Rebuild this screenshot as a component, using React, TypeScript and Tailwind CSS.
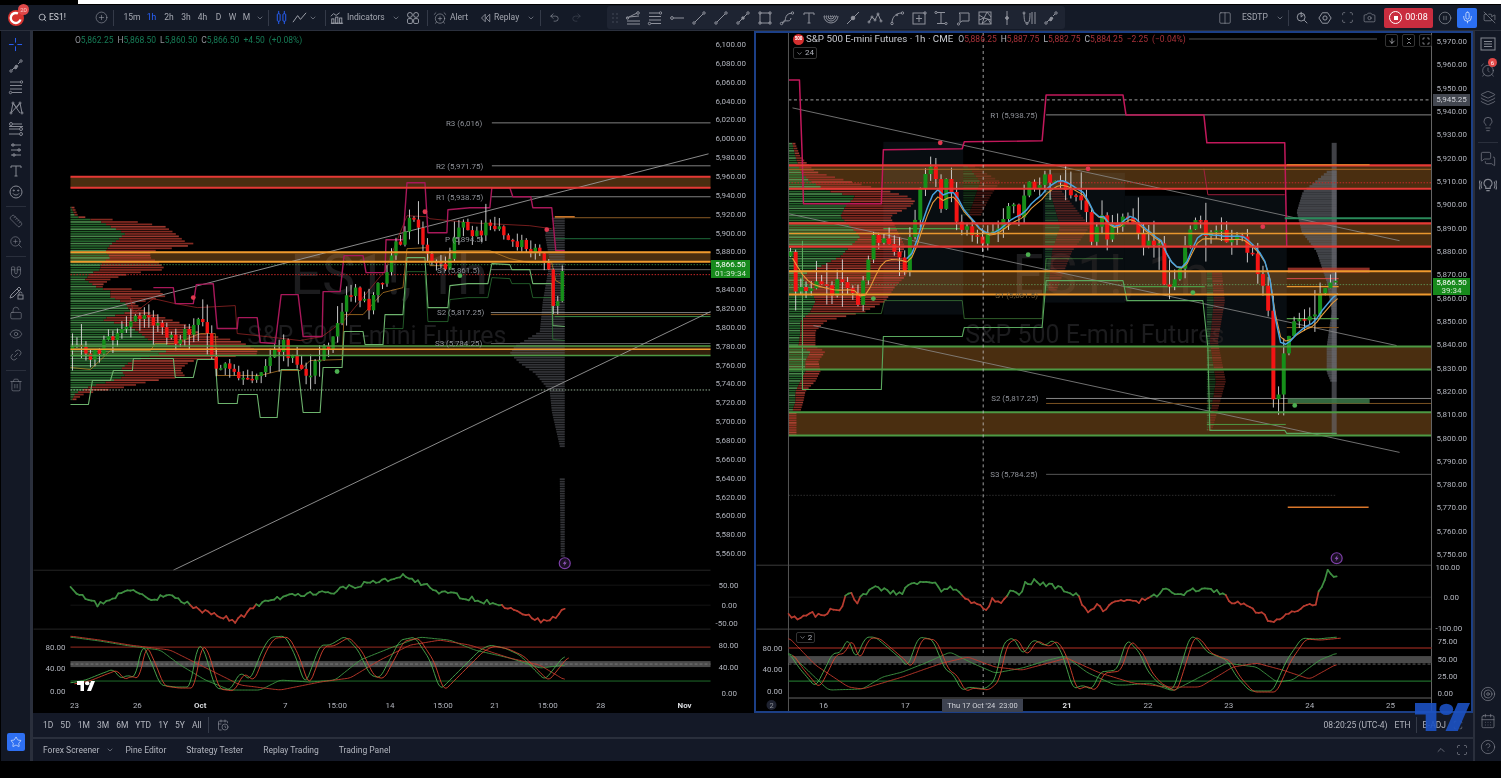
import type { ReactNode } from "react";
import {
  AlarmClock,
  AlarmClockPlus,
  ArrowDown,
  Camera,
  ChevronDown,
  ChevronUp,
  ChevronsDownUp,
  CircleHelp,
  CirclePause,
  CirclePlus,
  Columns2,
  Eye,
  Layers,
  Lightbulb,
  Link2,
  LockOpen,
  Magnet,
  MessagesSquare,
  Mic,
  Redo2,
  Ruler,
  Scan,
  Search,
  Star,
  Target,
  Trash2,
  Undo2,
  VideoOff,
  ZoomIn,
  CalendarDays,
  CalendarClock,
} from "lucide-react";

type Pt = [number, number];
type Row = [number, number, number];

const rng = (seed: number) => {
  let s = seed;
  return () => {
    s = (s * 1664525 + 1013904223) % 4294967296;
    return s / 4294967296;
  };
};

const interp = (pts: Pt[], x: number) => {
  if (x <= pts[0][0]) return pts[0][1];
  for (let i = 1; i < pts.length; i++) {
    if (x <= pts[i][0]) {
      const [x0, y0] = pts[i - 1];
      const [x1, y1] = pts[i];
      return y0 + ((y1 - y0) * (x - x0)) / (x1 - x0 || 1);
    }
  }
  return pts[pts.length - 1][1];
};

const toPoints = (pts: Pt[]) => pts.map((p) => `${p[0].toFixed(1)},${p[1].toFixed(1)}`).join(" ");

// sampled + moving average, so the stochastic lines get round tops
const smooth = (pts: Pt[], win = 2, step = 1.5): Pt[] => {
  const raw: Pt[] = [];
  for (let x = pts[0][0]; x <= pts[pts.length - 1][0]; x += step) raw.push([x, interp(pts, x)]);
  return raw.map((p, i) => {
    let sum = 0;
    let n = 0;
    for (let k = -win; k <= win; k++) {
      if (raw[i + k]) {
        sum += raw[i + k][1];
        n++;
      }
    }
    return [p[0], sum / n] as Pt;
  });
};

const shift = (pts: Pt[], dx: number, dy = 0): Pt[] => pts.map((p) => [p[0] + dx, p[1] + dy]);

const fmt = (n: number) => n.toLocaleString("en-US", { minimumFractionDigits: 2, maximumFractionDigits: 2 });

type Candle = { x: number; o: number; c: number; hi: number; lo: number };

const makeCandles = (pts: Pt[], x0: number, x1: number, step: number, amp: number, wick: number, seed: number) => {
  const r = rng(seed);
  const out: Candle[] = [];
  let prev = interp(pts, x0);
  for (let x = x0; x <= x1; x += step) {
    const c = interp(pts, x) + (r() - 0.5) * amp;
    const w = r() > 0.72 ? wick * 2.4 : wick;
    out.push({ x, o: prev, c, hi: Math.min(prev, c) - r() * w, lo: Math.max(prev, c) + r() * w });
    prev = c;
  }
  return out;
};

const Candles = ({ data, w }: { data: Candle[]; w: number }) => (
  <g>
    {data.map((d, i) => (
      <line key={i} x1={d.x} x2={d.x} y1={d.hi} y2={d.lo} stroke="#dcdcdc" strokeWidth={0.9} />
    ))}
    {data.map((d, i) => (
      <rect
        key={i}
        x={d.x - w / 2}
        y={Math.min(d.o, d.c)}
        width={w}
        height={Math.max(1.6, Math.abs(d.o - d.c))}
        fill={d.c < d.o ? "#168f1a" : "#f51414"}
      />
    ))}
  </g>
);

const Poly = ({ pts, c, w = 1, o = 1 }: { pts: Pt[]; c: string; w?: number; o?: number }) => (
  <polyline points={toPoints(pts)} fill="none" stroke={c} strokeWidth={w} opacity={o} strokeLinejoin="round" />
);

const HLine = ({ y, x1, x2, c, w = 1, dash, o = 1 }: { y: number; x1: number; x2: number; c: string; w?: number; dash?: string; o?: number }) => (
  <line x1={x1} x2={x2} y1={y} y2={y} stroke={c} strokeWidth={w} strokeDasharray={dash} opacity={o} />
);

const Profile = ({ rows, x0, step = 2.4, h = 1.7, o = 0.8 }: { rows: Row[]; x0: number; step?: number; h?: number; o?: number }) => {
  const g: Pt[] = rows.map((r) => [r[0], r[1]]);
  const t: Pt[] = rows.map((r) => [r[0], r[2]]);
  const bars: ReactNode[] = [];
  let i = 0;
  for (let y = rows[0][0]; y <= rows[rows.length - 1][0]; y += step) {
    const a = interp(g, y);
    const b = interp(t, y);
    bars.push(
      <g key={y} opacity={o}>
        <rect x={x0} y={y} width={Math.max(0, a - x0)} height={h} fill={i % 3 === 0 ? "#5aa85e" : "#2f7d38"} />
        <rect x={a} y={y} width={Math.max(0, b - a)} height={h} fill={i % 4 === 0 ? "#c2473a" : "#a5352a"} />
      </g>,
    );
    i++;
  }
  return <g>{bars}</g>;
};

const GrayProfile = ({ rows, x1, h = 1.7, step = 2.4, o = 0.55 }: { rows: Pt[]; x1: number; h?: number; step?: number; o?: number }) => {
  const bars: ReactNode[] = [];
  for (let y = rows[0][0]; y <= rows[rows.length - 1][0]; y += step) {
    const a = interp(rows, y);
    bars.push(<rect key={y} x={a} y={y} width={x1 - a} height={h} fill="#5c5f66" opacity={o} />);
  }
  return <g>{bars}</g>;
};

const Rsi = ({ pts, zero, seed }: { pts: Pt[]; zero: number; seed: number }) => {
  const r = rng(seed);
  const s: Pt[] = [];
  for (let x = pts[0][0]; x <= pts[pts.length - 1][0]; x += 3) s.push([x, interp(pts, x) + (r() - 0.5) * 5]);
  return (
    <g>
      {s.slice(1).map((p, i) => (
        <line
          key={i}
          x1={s[i][0]}
          y1={s[i][1]}
          x2={p[0]}
          y2={p[1]}
          stroke={(p[1] + s[i][1]) / 2 < zero ? "#3e8e41" : "#b83c30"}
          strokeWidth={1.7}
          strokeLinecap="round"
        />
      ))}
    </g>
  );
};

const Bolt = ({ x, y }: { x: number; y: number }) => (
  <g>
    <circle cx={x} cy={y} r={5.5} fill="#1a1022" stroke="#7d3fa8" strokeWidth={1.2} />
    <path d={`M${x + 1.2} ${y - 3.2}L${x - 2} ${y + 0.6}H${x}L${x - 1.2} ${y + 3.2}L${x + 2} ${y - 0.6}H${x}Z`} fill="#9a5cc6" />
  </g>
);

const Dot = ({ x, y, c }: { x: number; y: number; c: string }) => <circle cx={x} cy={y} r={2.4} fill={c} />;

const axisText = "fill-[#b2b5be] text-[8px]";
const labelText = "fill-[#8f9299] text-[8px]";
const bandFill = "#ffa037";

const Tv = ({ className }: { className: string }) => (
  <svg viewBox="0 0 36 22" preserveAspectRatio="none" className={className} fill="currentColor">
    <path d="M14 22H7V9H0V0h14v22zM28 22h-8l8-22h8L28 22z" />
    <circle cx="20.5" cy="5" r="4.5" />
  </svg>
);

// ---- left chart data (page coordinates) ----
const lPath: Pt[] = [
  [72, 350], [90, 355], [110, 340], [130, 325], [145, 310], [160, 330], [180, 340], [200, 315], [215, 360], [230, 375],
  [250, 380], [265, 365], [285, 345], [300, 375], [310, 375], [330, 340], [345, 295], [355, 290], [370, 305], [385, 270],
  [395, 250], [410, 220], [420, 225], [430, 265], [445, 272], [460, 225], [470, 235], [490, 225], [510, 235], [525, 245],
  [545, 260], [549, 275], [552, 312], [556, 312], [560, 282], [565, 268],
];
const lPink: Pt[] = [
  [153, 287], [173, 287], [175, 303], [193, 303], [196, 284], [213, 283], [217, 328], [237, 328], [238, 317], [257, 317],
  [260, 342], [275, 343], [281, 294], [298, 294], [303, 336], [322, 336], [323, 291], [340, 291], [344, 255], [363, 255],
  [366, 272], [385, 272], [386, 239], [403, 239], [407, 182], [425, 182], [428, 232], [447, 232], [448, 209], [470, 207],
  [490, 207], [492, 187], [510, 187], [513, 196], [531, 196], [533, 207], [552, 207], [556, 250], [565, 250],
];
const lGreen: Pt[] = [
  [70, 404], [88, 404], [92, 380], [110, 380], [113, 370], [132, 370], [133, 358], [173, 358], [175, 377], [193, 377],
  [197, 359], [215, 359], [218, 403], [237, 403], [238, 394], [257, 394], [260, 417], [277, 417], [281, 369], [298, 369],
  [303, 412], [320, 412], [323, 367], [342, 367], [344, 331], [363, 331], [365, 344], [383, 344], [385, 314], [403, 314],
  [407, 257], [425, 257], [428, 307], [448, 307], [450, 285], [468, 283], [488, 283], [492, 263], [510, 264], [512, 269],
  [530, 269], [533, 283], [552, 283], [553, 325], [565, 326],
];
const lOrange: Pt[] = [
  [70, 367], [90, 369], [110, 350], [150, 350], [155, 343], [175, 343], [200, 333], [215, 333], [217, 375], [260, 375],
  [280, 370], [300, 370], [310, 360], [342, 359], [344, 314], [363, 314], [383, 292], [403, 287], [407, 248], [427, 247],
  [430, 265], [448, 265], [450, 250], [490, 250], [510, 258], [530, 262], [552, 262], [556, 280], [565, 285],
];
const lDim: Pt[] = [
  [110, 297], [130, 297], [133, 313], [153, 298], [175, 303], [197, 307], [217, 306], [235, 305], [237, 333], [257, 335],
  [300, 340], [322, 336], [344, 320], [385, 270], [407, 215], [427, 216], [430, 218], [470, 222], [530, 225], [552, 228],
];
const lProfile: Row[] = [
  [206, 71, 74], [215, 75, 78], [220, 100, 135], [225, 110, 165], [232, 125, 175], [240, 115, 185], [243, 110, 197], [250, 105, 150],
  [256, 110, 150], [262, 100, 160], [268, 100, 165], [272, 90, 130], [278, 85, 110], [285, 95, 100], [290, 110, 160], [295, 110, 165],
  [302, 125, 135], [310, 130, 145], [318, 100, 170], [325, 130, 190], [332, 140, 200], [340, 150, 240], [345, 180, 250], [352, 160, 260],
  [360, 130, 190], [368, 120, 180], [375, 125, 185], [380, 110, 150], [385, 90, 130], [392, 75, 85], [400, 71, 73],
];
const lGray: Pt[] = [
  [217, 552], [225, 555], [232, 545], [260, 550], [300, 543], [330, 540], [345, 515], [352, 510], [362, 520], [372, 535], [390, 550], [410, 552], [445, 560],
];
const lRsi: Pt[] = [
  [70, 588], [85, 597], [97, 605], [115, 596], [130, 590], [150, 598], [170, 596], [200, 610], [235, 621], [260, 603],
  [290, 595], [330, 592], [370, 582], [405, 576], [440, 592], [480, 600], [500, 606], [520, 612], [548, 623], [565, 607],
];
const lFast: Pt[] = [
  [70, 683], [85, 680], [100, 674], [113, 669], [120, 679], [127, 675], [135, 678], [142, 643], [150, 660], [160, 685],
  [175, 687], [190, 687], [197, 645], [203, 647], [215, 688], [230, 690], [240, 672], [250, 680], [262, 650], [270, 637],
  [285, 636], [295, 655], [305, 685], [320, 645], [330, 645], [345, 636], [358, 650], [370, 675], [380, 678], [400, 640],
  [415, 637], [430, 660], [440, 690], [460, 670], [480, 650], [490, 645], [505, 648], [520, 655], [530, 665], [545, 680], [565, 655],
];
const lSlowG: Pt[] = [
  [70, 637], [100, 641], [130, 646], [160, 650], [180, 665], [205, 680], [230, 690], [260, 690], [280, 680], [310, 682],
  [335, 680], [360, 660], [390, 648], [420, 637], [450, 640], [475, 650], [510, 658], [540, 668], [565, 665],
];
const lSlowR: Pt[] = [
  [70, 636], [100, 640], [130, 645], [170, 650], [200, 665], [240, 685], [280, 690], [320, 682], [350, 678], [380, 660],
  [410, 645], [440, 640], [470, 645], [510, 658], [540, 665], [565, 680],
];
const lCandles = makeCandles(lPath, 72, 565, 4.5, 15, 9, 7);

// ---- right chart data ----
const rPath: Pt[] = [
  [788, 243], [795, 287], [802, 295], [815, 287], [835, 287], [850, 283], [857, 307], [863, 287], [872, 243], [880, 237],
  [888, 250], [905, 265], [912, 230], [918, 190], [932, 163], [938, 187], [940, 207], [947, 182], [955, 197], [958, 233],
  [968, 227], [975, 240], [985, 240], [995, 227], [1005, 210], [1022, 210], [1028, 187], [1042, 187], [1045, 173], [1058, 175],
  [1072, 193], [1083, 197], [1088, 230], [1095, 237], [1100, 207], [1108, 240], [1118, 220], [1125, 203], [1132, 217], [1140, 237],
  [1160, 247], [1165, 283], [1178, 273], [1183, 257], [1193, 210], [1202, 227], [1210, 237], [1240, 235], [1247, 247], [1257, 263],
  [1267, 293], [1270, 347], [1273, 398], [1278, 400], [1281, 370], [1285, 340], [1295, 318], [1310, 318], [1320, 295], [1333, 283], [1337, 282],
];
const rCandles = makeCandles(rPath, 790, 1337, 5.2, 17, 11, 11);
const rLine = makeCandles(rPath, 790, 1337, 5.2, 4, 0, 13);
const ema = (data: Candle[], k: number, off: number): Pt[] => {
  let v = data[0].c;
  return data.map((d) => {
    v += (d.c - v) * k;
    return [d.x + 2, v + off] as Pt;
  });
};
const rBlue = ema(rLine, 0.32, 0).filter((p) => p[0] > 905);
const rOrange = ema(rLine, 0.28, 3);
const rPink: Pt[] = [
  [788, 79], [799, 79], [802, 163], [803, 203], [881, 203], [883, 149], [962, 148], [964, 141], [1042, 140], [1046, 94],
  [1123, 94], [1126, 114], [1204, 114], [1207, 142], [1285, 142], [1287, 246],
];
const rPinkDim: Pt[] = [[1204, 168], [1208, 194], [1285, 194]];
const rGreen: Pt[] = [
  [802, 240], [802, 389], [881, 389], [883, 336], [962, 336], [964, 327], [1042, 327], [1046, 280], [1123, 280], [1127, 300],
  [1203, 300], [1208, 347], [1210, 430], [1285, 430], [1287, 433], [1337, 433],
];
const rGreenDim: Pt[] = [[802, 313], [881, 313], [884, 300], [962, 300], [964, 318], [1042, 318], [1046, 258], [1123, 258]];
const rProfile: Row[] = [
  [142, 792, 795], [155, 795, 800], [170, 800, 815], [180, 810, 850], [190, 830, 890], [195, 855, 908], [200, 850, 915], [205, 845, 910],
  [215, 840, 890], [225, 850, 895], [235, 860, 900], [245, 850, 905], [255, 840, 900], [265, 820, 910], [275, 800, 905], [285, 810, 895],
  [300, 815, 885], [310, 810, 865], [320, 800, 825], [330, 800, 815], [345, 798, 815], [350, 810, 825], [360, 805, 818], [370, 805, 820],
  [380, 800, 815], [390, 795, 805], [400, 795, 803], [410, 792, 800],
];
const rGray: Pt[] = [
  [170, 1327], [180, 1315], [190, 1303], [210, 1297], [230, 1302], [250, 1317], [280, 1327], [310, 1332], [345, 1327], [370, 1327], [380, 1331],
];
const rRsi: Pt[] = [
  [788, 615], [795, 618], [812, 614], [822, 617], [834, 607], [838, 613], [848, 591], [853, 595], [856, 605], [860, 596],
  [873, 587], [902, 594], [908, 583], [930, 584], [933, 580], [940, 592], [952, 588], [962, 595], [972, 603], [985, 609],
  [992, 600], [998, 603], [1003, 603], [1011, 587], [1018, 596], [1025, 584], [1035, 581], [1055, 586], [1068, 592], [1077, 595],
  [1088, 613], [1097, 605], [1103, 611], [1118, 600], [1135, 602], [1150, 598], [1165, 590], [1180, 595], [1200, 588], [1215, 590],
  [1230, 600], [1240, 604], [1255, 610], [1275, 623], [1285, 615], [1300, 608], [1315, 605], [1322, 585], [1328, 572], [1337, 577],
];
const rFast: Pt[] = [
  [788, 652], [798, 667], [815, 687], [825, 668], [832, 653], [840, 653], [848, 637], [855, 660], [865, 637], [875, 637],
  [888, 648], [902, 660], [907, 668], [918, 637], [932, 639], [938, 653], [945, 670], [952, 673], [962, 691], [968, 687],
  [985, 689], [995, 680], [1003, 643], [1013, 637], [1023, 655], [1033, 639], [1045, 646], [1053, 639], [1062, 653], [1073, 689],
  [1083, 685], [1092, 690], [1100, 672], [1117, 670], [1127, 639], [1140, 653], [1147, 670], [1157, 682], [1173, 691], [1185, 653],
  [1190, 636], [1197, 638], [1207, 652], [1227, 660], [1237, 677], [1250, 691], [1273, 691], [1287, 660], [1302, 638], [1317, 639], [1337, 637],
];
const rSlowR: Pt[] = [
  [788, 637], [815, 665], [848, 687], [862, 689], [902, 677], [942, 663], [968, 657], [995, 667], [1022, 670], [1067, 658],
  [1100, 673], [1133, 683], [1167, 687], [1200, 687], [1233, 667], [1257, 663], [1283, 670], [1310, 679], [1337, 664],
];
const rSlowG: Pt[] = [
  [788, 652], [828, 690], [862, 689], [882, 677], [902, 672], [925, 663], [950, 652], [972, 663], [995, 673], [1022, 668],
  [1048, 660], [1065, 656], [1088, 673], [1115, 685], [1127, 685], [1150, 683], [1173, 691], [1200, 677], [1227, 663], [1257, 667],
  [1277, 682], [1293, 680], [1320, 660], [1337, 653],
];

const LeftPriceAxis = () => {
  const ticks: number[] = [];
  for (let p = 6100; p >= 5560; p -= 20) ticks.push(p);
  return (
    <g>
      {ticks.map((p) => (
        <text key={p} x={716} y={43 + (6100 - p) * 0.9444 + 3} className={axisText}>
          {fmt(p)}
        </text>
      ))}
    </g>
  );
};

const RightPriceAxis = () => {
  const ticks: number[] = [];
  for (let p = 5970; p >= 5750; p -= 10) ticks.push(p);
  return (
    <g>
      {ticks.map((p) => (
        <text key={p} x={1437} y={40 + (5970 - p) * 2.336 + 3} className={axisText}>
          {fmt(p)}
        </text>
      ))}
    </g>
  );
};

const TimeLabels = ({ items, y }: { items: [string, number, boolean?][]; y: number }) => (
  <g>
    {items.map(([t, x, b]) => (
      <text key={t + x} x={x} y={y} textAnchor="middle" className={b ? "fill-[#d8dade] text-[8px] font-bold" : axisText}>
        {t}
      </text>
    ))}
  </g>
);

const Legend = ({ items, color }: { items: [string, string][]; color: string }) => (
  <div className={`flex gap-[4px] whitespace-nowrap text-[8.5px] leading-[10px] ${color}`}>
    {items.map(([k, v]) => (
      <span key={k + v}>
        <span className="text-[#b2b5be]">{k}</span>
        {v}
      </span>
    ))}
  </div>
);

const LeftChart = () => (
  <div className="relative h-full w-[721px] shrink-0 bg-black">
    <svg viewBox="33 30 721 683" className="block h-full w-full">
      <text x={290} y={293} className="fill-[#1c1c1e] text-[56px]">ES1!, 1h</text>
      <text x={247} y={343} className="fill-[#1c1c1e] text-[25px]">S&amp;P 500 E-mini Futures</text>

      <rect x={70} y={176} width={641} height={11} fill={bandFill} opacity={0.29} />
      <rect x={70} y={251} width={641} height={10} fill={bandFill} opacity={0.29} />
      <rect x={70} y={345} width={641} height={10} fill={bandFill} opacity={0.2} />

      <Profile rows={lProfile} x0={70} />
      <GrayProfile rows={lGray} x1={565} />
      <GrayProfile rows={[[478, 560], [555, 561]]} x1={565} />

      <HLine y={122} x1={492} x2={711} c="#a0a0a0" w={0.8} />
      <HLine y={165} x1={492} x2={711} c="#a0a0a0" w={0.8} />
      <HLine y={196} x1={491} x2={711} c="#a0a0a0" w={0.8} />
      <HLine y={217} x1={555} x2={711} c="#8a5a24" />
      <HLine y={216} x1={555} x2={575} c="#c8742a" w={1.5} />
      <HLine y={238} x1={555} x2={711} c="#1e6b3a" />
      <HLine y={269} x1={491} x2={711} c="#777" w={0.8} />
      <HLine y={312} x1={491} x2={711} c="#a0a0a0" w={0.8} />
      <HLine y={314} x1={491} x2={711} c="#8a5a24" />
      <HLine y={316} x1={555} x2={711} c="#3c8c46" />
      <HLine y={343} x1={491} x2={711} c="#777" w={0.8} />
      <HLine y={264} x1={70} x2={711} c="#3f8f4a" dash="1.5 1.5" w={0.8} />
      <HLine y={274} x1={70} x2={711} c="#c62828" dash="1.5 1.5" />
      <HLine y={389.5} x1={70} x2={711} c="#b8d8b8" dash="1.5 1.5" w={0.8} />

      <Poly pts={[[70, 318], [709, 153]]} c="#9a9a9a" w={0.9} />
      <Poly pts={[[173, 570], [711, 311]]} c="#9a9a9a" w={0.9} />
      <Poly pts={lOrange} c="#c8862a" o={0.7} />
      <Poly pts={lDim} c="#a52a2a" o={0.7} />
      <Poly pts={lGreen} c="#6db36d" w={1.1} />
      <Poly pts={shift(lGreen.slice(28), 0, 14)} c="#2f7d38" o={0.7} />
      <Poly pts={lPink} c="#a8185a" w={1.4} />

      <Candles data={lCandles} w={3.4} />

      <HLine y={176} x1={70} x2={711} c="#e53935" w={2} />
      <HLine y={187} x1={70} x2={711} c="#e53935" w={2} />
      <HLine y={251.5} x1={70} x2={711} c="#ef9a2e" w={2} />
      <HLine y={261} x1={70} x2={711} c="#ef9a2e" w={2} />
      <HLine y={345.5} x1={70} x2={711} c="#4d9a44" w={1.6} />
      <HLine y={348.7} x1={70} x2={711} c="#ef9a2e" w={1.6} />
      <HLine y={355} x1={70} x2={711} c="#4d9a44" w={1.6} />

      <Dot x={193} y={297} c="#e0384f" />
      <Dot x={337} y={371} c="#4caf50" />
      <Dot x={425} y={211} c="#e0384f" />
      <Dot x={460} y={275} c="#4caf50" />
      <Dot x={547} y={229} c="#e0384f" />

      <text x={446} y={125} className={labelText}>R3 (6,016)</text>
      <text x={436} y={168} className={labelText}>R2 (5,971.75)</text>
      <text x={436} y={199} className={labelText}>R1 (5,938.75)</text>
      <text x={445} y={241} className={labelText}>P (5,894.5)</text>
      <text x={437} y={272} className={labelText}>S1 (5,861.5)</text>
      <text x={437} y={314} className={labelText}>S2 (5,817.25)</text>
      <text x={435} y={345} className={labelText}>S3 (5,784.25)</text>

      <Bolt x={565} y={563} />

      <HLine y={570} x1={33} x2={711} c="#252525" />
      <HLine y={629} x1={33} x2={711} c="#252525" />
      <HLine y={585} x1={70} x2={711} c="#141414" />
      <HLine y={605} x1={70} x2={711} c="#141414" />

      <Rsi pts={lRsi} zero={605} seed={3} />

      <rect x={70} y={661} width={641} height={6} fill="#4a4a4a" />
      <HLine y={664} x1={70} x2={711} c="#8a8a8a" dash="3 2" w={0.7} />
      <HLine y={647} x1={70} x2={711} c="#9b2c22" />
      <HLine y={681} x1={70} x2={711} c="#1f6b2a" />
      <Poly pts={smooth(lSlowG)} c="#3f9a45" w={0.9} />
      <Poly pts={smooth(lSlowR)} c="#c53a2c" w={0.9} />
      <Poly pts={smooth(lFast)} c="#4caf50" w={0.9} />
      <Poly pts={smooth(shift(lFast, 4, 1))} c="#d9432f" w={0.9} />

      <text x={65} y={650} textAnchor="end" className={axisText}>80.00</text>
      <text x={65} y={671} textAnchor="end" className={axisText}>40.00</text>
      <text x={65} y={694} textAnchor="end" className={axisText}>0.00</text>

      <LeftPriceAxis />
      <text x={719} y={588} className={axisText}>50.00</text>
      <text x={722} y={608} className={axisText}>0.00</text>
      <text x={716} y={626} className={axisText}>-50.00</text>
      <text x={719} y={648} className={axisText}>80.00</text>
      <text x={719} y={670} className={axisText}>40.00</text>
      <text x={722} y={696} className={axisText}>0.00</text>

      <TimeLabels
        y={708}
        items={[
          ["23", 74], ["26", 137], ["Oct", 200, true], ["7", 285], ["15:00", 337], ["14", 390], ["15:00", 443],
          ["21", 495], ["15:00", 548], ["28", 601], ["Nov", 685, true],
        ]}
      />
    </svg>

    <div className="absolute left-[42px] top-[4px] opacity-80">
      <Legend
        color="text-[#1d9a6c]"
        items={[["O", "5,862.25"], ["H", "5,868.50"], ["L", "5,860.50"], ["C", "5,866.50"], ["", "+4.50"], [" ", "(+0.08%)"]]}
      />
    </div>
    <Tv className="absolute left-[44px] top-[650px] h-[10px] w-[18px] text-white" />
    <div className="absolute left-[678px] top-[229px] flex h-[18px] w-[39px] flex-col items-center justify-center bg-[#178a1c] text-[8px] leading-[9px] text-white">
      <span>5,866.50</span>
      <span className="text-[#cfe8cf]">01:39:34</span>
    </div>
  </div>
);

const RightChart = () => (
  <div className="relative h-full w-[719px] shrink-0 border-2 border-[#1c3f86] bg-black">
    <svg viewBox="756 32 715 679" className="block h-full w-full">
      <rect x={883} y={141} width={80} height={173} fill="#080d11" />
      <rect x={1043} y={172} width={82} height={130} fill="#080d11" />
      <rect x={1125} y={195} width={80} height={105} fill="#080d11" />
      <rect x={1205} y={195} width={82} height={150} fill="#080d11" />

      <text x={1012} y={293} className="fill-[#1c1c1e] text-[56px]">ES1!, 1h</text>
      <text x={965} y={342} className="fill-[#1c1c1e] text-[25px]">S&amp;P 500 E-mini Futures</text>

      <rect x={788} y={164} width={644} height={24} fill={bandFill} opacity={0.29} />
      <rect x={788} y={222} width={644} height={24} fill={bandFill} opacity={0.29} />
      <rect x={788} y={271} width={644} height={23} fill={bandFill} opacity={0.29} />
      <rect x={788} y={346} width={644} height={23} fill={bandFill} opacity={0.29} />
      <rect x={788} y={412} width={644} height={23} fill={bandFill} opacity={0.29} />

      <Profile rows={rProfile} x0={788} />
      <Profile rows={[[412, 788, 796], [435, 788, 796]]} x0={788} />
      <Profile rows={[[165, 968, 975], [180, 980, 1000], [195, 975, 990], [215, 968, 980]]} x0={963} o={0.35} />
      <Profile rows={[[190, 1050, 1062], [225, 1060, 1090], [250, 1052, 1072], [290, 1048, 1056]]} x0={1045} o={0.4} />
      <Profile rows={[[270, 1212, 1222], [300, 1214, 1225], [340, 1210, 1218], [380, 1216, 1226], [430, 1208, 1212]]} x0={1207} o={0.45} />

      <GrayProfile rows={rGray} x1={1337} h={2.4} o={0.7} />
      <rect x={1332} y={142} width={5} height={293} fill="#6a6d74" opacity={0.6} />

      <Poly pts={[[792, 107], [1400, 240]]} c="#8c8c8c" w={0.8} />
      <Poly pts={[[788, 213], [1397, 345]]} c="#8c8c8c" w={0.8} />
      <Poly pts={[[813, 325], [1400, 452]]} c="#8c8c8c" w={0.8} />

      <HLine y={99} x1={788} x2={1432} c="#c8c8c8" dash="3 2.5" w={0.8} />
      <HLine y={114} x1={1046} x2={1432} c="#a8a8a8" w={0.8} />
      <HLine y={398} x1={1046} x2={1432} c="#a8a8a8" w={0.8} />
      <HLine y={403} x1={1046} x2={1432} c="#7a5222" />
      <HLine y={474} x1={1046} x2={1432} c="#555" />
      <HLine y={495} x1={788} x2={1337} c="#3a3a3a" dash="1.5 1.5" w={0.8} />
      <HLine y={507} x1={1288} x2={1369} c="#d9762a" w={1.5} />
      <HLine y={182} x1={788} x2={1432} c="#c62828" dash="1.5 1.5" />
      <HLine y={284} x1={788} x2={1432} c="#5fa05f" dash="1.5 1.5" w={0.8} />

      <rect x={1288} y={267} width={82} height={5} fill="#b23a2e" opacity={0.8} />
      <rect x={1288} y={398} width={82} height={5} fill="#3d7a4a" opacity={0.85} />
      <HLine y={278} x1={1287} x2={1339} c="#d84a4a" />
      <HLine y={286} x1={1287} x2={1339} c="#e8962e" w={1.4} />
      <HLine y={318} x1={1287} x2={1339} c="#4d9a44" w={1.4} />
      <HLine y={327} x1={1287} x2={1339} c="#8a5a24" />
      <HLine y={424} x1={1207} x2={1286} c="#4d9a44" />
      <HLine y={286} x1={1125} x2={1205} c="#4d9a44" w={1.4} />
      <HLine y={228} x1={883} x2={962} c="#4d9a44" w={1.2} />

      <Poly pts={rPink} c="#c2185b" w={1.5} />
      <Poly pts={rPinkDim} c="#a52040" />
      <Poly pts={rGreen} c="#5aa85e" w={1.1} />
      <Poly pts={rGreenDim} c="#4d9a44" o={0.6} />

      <Candles data={rCandles} w={4} />
      <Poly pts={rOrange} c="#e69a3a" w={1.1} />
      <Poly pts={rBlue} c="#4aa3e0" w={1.5} />

      <HLine y={164.5} x1={788} x2={1432} c="#e53935" w={2.2} />
      <HLine y={164} x1={1287} x2={1370} c="#e8962e" w={1} />
      <HLine y={168.5} x1={788} x2={1432} c="#a8682a" />
      <HLine y={188} x1={788} x2={1432} c="#e53935" w={2.2} />
      <HLine y={217.5} x1={1285} x2={1432} c="#2a8a5a" w={2} />
      <HLine y={222.7} x1={788} x2={1432} c="#e53935" w={2.2} />
      <HLine y={232.7} x1={788} x2={1432} c="#e8962e" w={1.5} />
      <HLine y={246} x1={788} x2={1432} c="#e53935" w={2.2} />
      <HLine y={270.7} x1={788} x2={1432} c="#ef9a2e" w={2} />
      <HLine y={294} x1={788} x2={1432} c="#ef9a2e" w={2} />
      <HLine y={346} x1={788} x2={1432} c="#4d9a44" w={2} />
      <HLine y={369} x1={788} x2={1432} c="#4d9a44" w={2} />
      <HLine y={411.7} x1={788} x2={1432} c="#4d9a44" w={2} />
      <HLine y={435} x1={788} x2={1432} c="#4d9a44" w={2} />

      <Dot x={940} y={142} c="#e0384f" />
      <Dot x={1088} y={168} c="#e0384f" />
      <Dot x={1263} y={226} c="#e0384f" />
      <Dot x={873} y={298} c="#4caf50" />
      <Dot x={1028} y={254} c="#4caf50" />
      <Dot x={1193} y={292} c="#4caf50" />
      <Dot x={1295} y={405} c="#4caf50" />

      <text x={990} y={117} className={labelText}>R1 (5,938.75)</text>
      <text x={995} y={297} className="fill-[#6b5a3a] text-[8px]">S1 (5,861.5)</text>
      <text x={991} y={401} className={labelText}>S2 (5,817.25)</text>
      <text x={990} y={477} className={labelText}>S3 (5,784.25)</text>

      <Bolt x={1337} y={558} />

      <line x1={983} x2={983} y1={32} y2={698} stroke="#c8c8c8" strokeDasharray="3 3" strokeWidth={0.8} />

      <HLine y={565} x1={756} x2={1432} c="#3a3a3a" />
      <HLine y={597} x1={788} x2={1432} c="#1c1c1c" />
      <HLine y={629} x1={756} x2={1432} c="#444" />
      <HLine y={698} x1={788} x2={1432} c="#666" />
      <line x1={788} x2={788} y1={32} y2={711} stroke="#555" />
      <line x1={1432} x2={1432} y1={32} y2={711} stroke="#666" />

      <Rsi pts={rRsi} zero={596} seed={5} />

      <rect x={788} y={656} width={644} height={7} fill="#4a4a4a" />
      <HLine y={664} x1={788} x2={1432} c="#8a8a8a" dash="3 2" w={0.7} />
      <HLine y={648} x1={788} x2={1432} c="#7a2018" w={1.5} />
      <HLine y={681} x1={788} x2={1432} c="#1f6b2a" w={1.2} />
      <Poly pts={smooth(rSlowG)} c="#3f9a45" w={0.9} />
      <Poly pts={smooth(rSlowR)} c="#c53a2c" w={0.9} />
      <Poly pts={smooth(rFast)} c="#4caf50" w={0.9} />
      <Poly pts={smooth(shift(rFast, 4, 1))} c="#d9432f" w={0.9} />

      <text x={782} y={651} textAnchor="end" className={axisText}>80.00</text>
      <text x={782} y={672} textAnchor="end" className={axisText}>40.00</text>
      <text x={782} y={694} textAnchor="end" className={axisText}>0.00</text>

      <RightPriceAxis />
      <text x={1436} y={570} className={axisText}>100.00</text>
      <text x={1444} y={600} className={axisText}>0.00</text>
      <text x={1436} y={631} className={axisText}>-100.00</text>
      <text x={1438} y={644} className={axisText}>75.00</text>
      <text x={1438} y={662} className={axisText}>50.00</text>
      <text x={1438} y={679} className={axisText}>25.00</text>
      <text x={1438} y={696} className={axisText}>0.00</text>

      <TimeLabels
        y={708}
        items={[["16", 823], ["17", 905], ["21", 1067, true], ["22", 1148], ["23", 1229], ["24", 1310], ["25", 1391]]}
      />
      <circle cx={771} cy={705} r={5} fill="#1e2230" />
      <text x={771} y={708} textAnchor="middle" className="fill-[#8f9299] text-[7.5px]">2</text>
    </svg>

    {/* pane header */}
    <div className="absolute left-[37px] top-0 flex h-[12px] items-center">
      <div className="flex h-[11px] w-[11px] items-center justify-center rounded-full bg-[#d32f2f] text-[4.5px] font-bold text-white">500</div>
      <span className="ml-[2px] whitespace-nowrap text-[9.75px] text-[#c8cad0]">S&amp;P 500 E-mini Futures · 1h · CME</span>
      <div className="ml-[5px]">
        <Legend
          color="text-[#a8323a]"
          items={[["O", "5,886.25"], ["H", "5,887.75"], ["L", "5,882.75"], ["C", "5,884.25"], ["", "−2.25"], [" ", "(−0.04%)"]]}
        />
      </div>
      <div className="ml-[3px] h-[2px] w-[188px] bg-[#2a2a2a]" />
    </div>
    <div className="absolute left-[37px] top-[14px] flex h-[12px] w-[24px] items-center justify-center gap-[2px] rounded-[2px] border border-[#333] text-[8px] text-[#b2b5be]">
      <ChevronDown size={7} />
      24
    </div>
    <div className="absolute left-[40px] top-[599px] flex h-[11px] w-[19px] items-center justify-center gap-[2px] rounded-[2px] border border-[#333] bg-black text-[8px] text-[#b2b5be]">
      <ChevronDown size={7} />
      2
    </div>
    <div className="absolute right-[39px] top-[1px] flex gap-[4px] text-[#d0d2d8]">
      <span className="flex h-[13px] w-[13px] items-center justify-center rounded-[2px] border border-[#333] bg-black"><ArrowDown size={8} /></span>
      <span className="flex h-[13px] w-[13px] items-center justify-center rounded-[2px] border border-[#333] bg-black"><ChevronsDownUp size={8} /></span>
      <span className="flex h-[13px] w-[13px] items-center justify-center rounded-[2px] border border-[#333] bg-black"><Scan size={8} /></span>
    </div>

    <div className="absolute left-[677px] top-[61px] flex h-[12px] w-[37px] items-center justify-center bg-[#434750] text-[8px] text-[#d0d2d8]">5,945.25</div>
    <div className="absolute left-[677px] top-[245px] flex h-[17px] w-[37px] flex-col items-center justify-center bg-[#178a1c] text-[8px] leading-[8px] text-white">
      <span>5,866.50</span>
      <span className="text-[#cfe8cf]">39:34</span>
    </div>
    <div className="absolute left-[186px] top-[666px] flex h-[13px] w-[81px] items-center justify-center bg-[#3d4250] text-[7.5px] text-[#d0d2d8]">Thu 17 Oct '24&nbsp;&nbsp;23:00</div>
  </div>
);

// ---- icons ----
const Ic = ({ children, size = 16 }: { children: ReactNode; size?: number }) => (
  <svg viewBox="0 0 16 16" width={size} height={size} fill="none" stroke="currentColor" strokeWidth={1}>
    {children}
  </svg>
);

const TrendEnds = () => (
  <>
    <circle cx="3" cy="13" r="1.2" />
    <circle cx="13" cy="3" r="1.2" />
    <path d="M4 12 12 4" />
  </>
);
const PencilLink = () => (
  <>
    <circle cx="3" cy="13" r="1.2" />
    <circle cx="13" cy="3" r="1.2" />
    <path d="M4 12 6 10M10 6l2-2" />
    <path d="M6 10 8 7l2 1-2 3z" fill="currentColor" />
  </>
);
const FibLines = () => (
  <>
    <path d="M2 3h10M2 6.5h12M2 10h12M4 13.5h10" />
    <circle cx="13.5" cy="3" r="1.2" />
    <circle cx="2.5" cy="13.5" r="1.2" />
  </>
);

const drawTools: ReactNode[] = [
  <><path d="M2 14h13M2 11h13M2 8l10-5" /><path d="M4 7l10-1" /><circle cx="2.5" cy="8" r="1.2" /><circle cx="13" cy="3" r="1.3" /></>,
  <FibLines />,
  <><path d="M4.5 8H15" /><circle cx="3" cy="8" r="1.4" /></>,
  <TrendEnds />,
  <TrendEnds />,
  <><circle cx="3" cy="13" r="1.2" /><circle cx="13" cy="3" r="1.2" /><path d="M4 12l8-8" /><path d="M7 9l2-2" strokeWidth="3" /></>,
  <><rect x="3" y="3" width="10" height="10" /><circle cx="3" cy="3" r="1.2" /><circle cx="13" cy="3" r="1.2" /><circle cx="3" cy="13" r="1.2" /><circle cx="13" cy="13" r="1.2" /></>,
  <><path d="M3 13C9 13 3 4 13 3" /><path d="M3 13c2-5 8 1 9-5" /><circle cx="2.5" cy="13.5" r="1.2" /><circle cx="13.5" cy="3" r="1.2" /></>,
  <path d="M3 3h10M8 3v10M3 3v2M13 3v2M6.5 13h3" />,
  <><path d="M1 6a7 7 0 0 0 14 0M3 6a5 5 0 0 0 10 0M5 6a3 3 0 0 0 6 0M7 6a1 1 0 0 0 2 0" /><path d="M1 6h14" strokeDasharray="1 1" /></>,
  <><path d="M2 14 14 2" /><circle cx="8" cy="8" r="1.8" fill="currentColor" /></>,
  <><path d="M2 12l3-5 3 3 3-6 3 7" /><circle cx="2" cy="12" r="1" /><circle cx="5" cy="7" r="1" /><circle cx="8" cy="10" r="1" /><circle cx="11" cy="4" r="1" /><circle cx="14" cy="11" r="1" /></>,
  <><path d="M3 13c0-6 4-10 10-10" /><circle cx="3" cy="13.5" r="1.2" /><circle cx="13.5" cy="3" r="1.2" /><circle cx="8" cy="5" r="0.8" /></>,
  <><rect x="2" y="3" width="12" height="11" /><path d="M8 5v7M5 8.5h6" /><circle cx="14" cy="3" r="1.2" /></>,
  <><path d="M4 2.5h8M4 13.5h8M8 2.5v11" /><circle cx="3" cy="2.5" r="1.1" /><circle cx="13" cy="13.5" r="1.1" /></>,
  <><path d="M4 3h10v8H7l-2 1.5V4z" /><circle cx="3.5" cy="14" r="1.1" /></>,
  <><rect x="2" y="2" width="12" height="12" /><path d="M2 5l5 3 3-6M7 8l-2 6M7 8l7 2M10 2l4 5M5 14l6-5 3 5M2 10l5-2" /></>,
  <><path d="M8 1v14" /><circle cx="8" cy="8" r="1.4" fill="currentColor" /></>,
  <><path d="M3 3c0 8 1 10 3 10s3-2 3-10M11 2v12M14 2v12" /><circle cx="3" cy="3" r="1" /><circle cx="6" cy="13.5" r="1" /></>,
  <PencilLink />,
];

const Sep = ({ className = "" }: { className?: string }) => <div className={`h-[16px] w-px shrink-0 bg-[#343a48] ${className}`} />;

const Tf = ({ t, w, active }: { t: string; w: string; active?: boolean }) => (
  <span className={`flex justify-center ${w} ${active ? "text-[#2962ff]" : ""}`}>{t}</span>
);

const Chev = ({ className = "" }: { className?: string }) => (
  <span className={`flex w-[10px] shrink-0 justify-center text-[#8a8e98] ${className}`}>
    <ChevronDown size={8} />
  </span>
);

const TopBar = () => (
  <div className="flex h-[25px] shrink-0 items-center bg-[#141a27] text-[8.5px] text-[#a4a7b0]">
    <div className="flex w-[607px] shrink-0 items-center">
      <div className="relative ml-[8px] h-[16px] w-[16px] shrink-0 rounded-full bg-[#d6322e]">
        <svg viewBox="0 0 16 16" className="h-[16px] w-[16px]" fill="none" stroke="#fff" strokeWidth="2.4">
          <path d="M10 3.5a5 5 0 1 0 2.5 6" />
        </svg>
        <span className="absolute left-[10px] top-[-6px] flex h-[11px] w-[11px] items-center justify-center rounded-full bg-[#e04848] text-[6px] text-[#f6c6c6]">20</span>
      </div>
      <div className="ml-[14px] flex w-[37px] shrink-0 items-center gap-[2px] text-[#d0d2d8]">
        <Search size={9} />
        ES1!
      </div>
      <span className="ml-[17px] flex w-[18px] shrink-0 justify-center"><CirclePlus size={13} strokeWidth={1} /></span>
      <Sep className="ml-[3px]" />
      <div className="ml-[7px] flex shrink-0">
        <Tf t="15m" w="w-[22px]" />
        <Tf t="1h" w="w-[17px]" active />
        <Tf t="2h" w="w-[18px]" />
        <Tf t="3h" w="w-[16px]" />
        <Tf t="4h" w="w-[17px]" />
        <Tf t="D" w="w-[15px]" />
        <Tf t="W" w="w-[13px]" />
        <Tf t="M" w="w-[15px]" />
      </div>
      <Chev className="ml-[1px]" />
      <Sep className="ml-[3px]" />
      <span className="ml-[3px] flex w-[18px] shrink-0 justify-center text-[#2962ff]">
        <Ic size={15}><path d="M5 1v3M5 12v3M11 1v3M11 12v3" /><rect x="3.5" y="4" width="3" height="8" rx="1" /><rect x="9.5" y="4" width="3" height="8" rx="1" /></Ic>
      </span>
      <span className="flex w-[18px] shrink-0 justify-center"><Ic size={15}><path d="M1 13 6 6l3 4 6-7" /></Ic></span>
      <Chev />
      <Sep className="ml-[7px]" />
      <span className="ml-[3px] flex w-[16px] shrink-0 justify-center">
        <Ic size={14}><path d="M1 6l3-3 3 2 4-3M1 14h14" /><rect x="2" y="9" width="2.5" height="5" /><rect x="6.5" y="7" width="2.5" height="7" /><rect x="11" y="8" width="2.5" height="6" /></Ic>
      </span>
      <span className="ml-[2px] w-[38px] shrink-0">Indicators</span>
      <Chev className="ml-[6px]" />
      <span className="ml-[4px] flex w-[16px] shrink-0 justify-center">
        <Ic size={14}><circle cx="4.5" cy="4.5" r="2.8" /><circle cx="11.5" cy="4.5" r="2.8" /><rect x="1.7" y="8.7" width="5.6" height="5.6" rx="1.5" /><rect x="8.7" y="8.7" width="5.6" height="5.6" rx="1.5" /></Ic>
      </span>
      <Sep className="ml-[6px]" />
      <span className="ml-[4px] flex w-[16px] shrink-0 justify-center"><AlarmClockPlus size={14} strokeWidth={1} /></span>
      <span className="ml-[2px] w-[20px] shrink-0">Alert</span>
      <span className="ml-[9px] flex w-[14px] shrink-0 justify-center">
        <Ic size={12}><path d="M7 3 2 8l5 5M13 3 8 8l5 5zM7 3v10" /></Ic>
      </span>
      <span className="ml-px w-[26px] shrink-0">Replay</span>
      <Chev className="ml-[6px]" />
      <Sep className="ml-[4px]" />
      <span className="ml-[6px] flex w-[14px] shrink-0 justify-center"><Undo2 size={11} strokeWidth={1.2} /></span>
      <span className="ml-[8px] flex w-[14px] shrink-0 justify-center text-[#4a4f5c]"><Redo2 size={11} strokeWidth={1.2} /></span>
    </div>

    <div className="flex h-[23px] w-[458px] shrink-0 items-center rounded-[3px] bg-[#1e2432] text-[#8f929c]">
      <span className="flex w-[15px] shrink-0 justify-center text-[#4a4f5c]">
        <svg viewBox="0 0 6 10" width="6" height="10" fill="currentColor">
          <circle cx="1" cy="1" r=".8" /><circle cx="5" cy="1" r=".8" /><circle cx="1" cy="5" r=".8" /><circle cx="5" cy="5" r=".8" /><circle cx="1" cy="9" r=".8" /><circle cx="5" cy="9" r=".8" />
        </svg>
      </span>
      {drawTools.map((t, i) => (
        <span key={i} className="flex w-[22px] shrink-0 justify-center">
          <Ic>{t}</Ic>
        </span>
      ))}
    </div>

    <div className="flex flex-1 items-center">
      <span className="ml-[152px] flex w-[16px] shrink-0 justify-center"><Columns2 size={14} strokeWidth={1} /></span>
      <span className="ml-[9px] w-[26px] shrink-0">ESDTP</span>
      <Chev className="ml-[7px]" />
      <Sep className="ml-[3px]" />
      <span className="ml-[6px] flex w-[14px] shrink-0 justify-center">
        <Ic size={14}><circle cx="7" cy="7" r="4.5" /><path d="M10.5 10.5 14 14M7 1v6l3-3" /></Ic>
      </span>
      <span className="ml-[9px] flex w-[14px] shrink-0 justify-center">
        <Ic size={14}><path d="M5 2h6l4 6-4 6H5L1 8z" /><circle cx="8" cy="8" r="2.4" /></Ic>
      </span>
      <span className="ml-[8px] flex w-[14px] shrink-0 justify-center"><Scan size={13} strokeWidth={1} /></span>
      <span className="ml-[8px] flex w-[14px] shrink-0 justify-center"><Camera size={13} strokeWidth={1} /></span>
      <div className="ml-[8px] flex h-[20px] w-[49px] shrink-0 items-center justify-center gap-[3px] rounded-[2px] bg-[#c92d3f] text-[9px] text-white">
        <span className="flex h-[13px] w-[13px] items-center justify-center rounded-full border border-white">
          <span className="h-[4px] w-[4px] bg-white" />
        </span>
        00:08
      </div>
      <span className="ml-[4px] flex w-[16px] shrink-0 justify-center"><CirclePause size={14} strokeWidth={1} /></span>
      <div className="ml-[4px] flex h-[20px] w-[20px] shrink-0 items-center justify-center rounded-[2px] bg-[#2b6ff2] text-white">
        <Mic size={13} strokeWidth={1.2} />
      </div>
      <span className="ml-[5px] flex w-[14px] shrink-0 justify-center"><VideoOff size={13} strokeWidth={1} /></span>
    </div>
  </div>
);

const RailIcon = ({ children }: { children: ReactNode }) => <div className="flex h-[21px] items-center justify-center">{children}</div>;

const RailSep = ({ className }: { className: string }) => <div className={`mx-auto h-px w-[20px] bg-[#2a2f3c] ${className}`} />;

const LeftRail = () => (
  <div className="flex h-full w-[33px] shrink-0 flex-col border-l border-r-[3px] border-l-black border-r-[#2a2f3c] bg-[#131825] pt-[3px] text-[#858892]">
    <RailIcon><span className="text-[#2962ff]"><Ic size={15}><path d="M8 1v5M8 10v5M1 8h5M10 8h5" /></Ic></span></RailIcon>
    <RailIcon><Ic><PencilLink /></Ic></RailIcon>
    <RailIcon><Ic><FibLines /></Ic></RailIcon>
    <RailIcon>
      <Ic>
        <path d="M3 13 5 3l3.5 5L12 3l2 10M5 3l7 10M12 3l-9 10" />
        <circle cx="3" cy="13" r="1" /><circle cx="5" cy="3" r="1" /><circle cx="12" cy="3" r="1" /><circle cx="14" cy="13" r="1" />
      </Ic>
    </RailIcon>
    <RailIcon>
      <Ic>
        <path d="M5 3h9M1 8h10M1 13h10M1 5.5h14" />
        <circle cx="3" cy="3" r="1.5" /><circle cx="13" cy="8" r="1.5" /><circle cx="13" cy="13" r="1.5" />
      </Ic>
    </RailIcon>
    <RailIcon>
      <Ic>
        <path d="M3 3h10M3 8h10M3 13h10" />
        <circle cx="5" cy="3" r="1.2" /><circle cx="11" cy="8" r="1.2" /><circle cx="6" cy="13" r="1.2" />
      </Ic>
    </RailIcon>
    <RailIcon><Ic><path d="M3 3h10M8 3v10M3 3v2M13 3v2M6.5 13h3" /></Ic></RailIcon>
    <RailIcon>
      <Ic>
        <circle cx="8" cy="8" r="6" /><circle cx="5.8" cy="6.5" r=".6" fill="currentColor" /><circle cx="10.2" cy="6.5" r=".6" fill="currentColor" /><path d="M5 9.5c1.5 2 4.5 2 6 0" />
      </Ic>
    </RailIcon>
    <RailSep className="mt-[4px]" />
    <div className="mt-[3px]">
      <RailIcon><Ruler size={14} strokeWidth={1} /></RailIcon>
      <RailIcon><ZoomIn size={14} strokeWidth={1} /></RailIcon>
    </div>
    <RailSep className="mt-[4px]" />
    <div className="mt-[3px]">
      <RailIcon><Magnet size={14} strokeWidth={1} className="rotate-[135deg]" /></RailIcon>
      <RailIcon>
        <Ic><path d="M2 14l1-3 6-6 2 2-6 6zM9 5l2-2 2 2-2 2" /><rect x="10" y="11" width="5" height="4" /><path d="M11 11V9.5a1.5 1.5 0 0 1 3 0" /></Ic>
      </RailIcon>
      <RailIcon><LockOpen size={14} strokeWidth={1} /></RailIcon>
      <RailIcon><Eye size={14} strokeWidth={1} /></RailIcon>
      <RailIcon><Link2 size={14} strokeWidth={1} className="-rotate-45" /></RailIcon>
    </div>
    <RailSep className="mt-[5px]" />
    <div className="mt-[3px]">
      <RailIcon><Trash2 size={14} strokeWidth={1} /></RailIcon>
    </div>
    <div className="mb-[10px] mt-auto flex justify-center">
      <div className="flex h-[18px] w-[18px] items-center justify-center rounded-[2px] bg-[#2e6ff2] text-white">
        <Star size={12} strokeWidth={1.2} />
      </div>
    </div>
  </div>
);

const RightRail = () => (
  <div className="flex h-full flex-1 flex-col items-center border-l-2 border-l-[#2a2f3c] bg-[#131825] pb-[5px] text-[#858892]">
    <div className="mt-[4px] flex h-[18px] w-[16px] items-center justify-center">
      <Ic><rect x="1" y="2" width="14" height="12" /><path d="M4 5.5h8M4 8h8M4 10.5h8" /></Ic>
    </div>
    <div className="relative mt-[8px] flex h-[18px] w-[16px] items-center justify-center">
      <AlarmClock size={16} strokeWidth={1} />
      <span className="absolute left-[8px] top-[-3px] flex h-[9px] w-[9px] items-center justify-center rounded-full bg-[#e04848] text-[6px] text-white">6</span>
    </div>
    <div className="mt-[10px] flex h-[18px] w-[16px] items-center justify-center"><Layers size={16} strokeWidth={1} /></div>
    <div className="mt-[8px] flex h-[18px] w-[16px] items-center justify-center"><Lightbulb size={16} strokeWidth={1} /></div>
    <div className="mt-[9px] h-px w-[20px] bg-[#2a2f3c]" />
    <div className="mt-[7px] flex h-[18px] w-[16px] items-center justify-center"><MessagesSquare size={16} strokeWidth={1} /></div>
    <div className="mt-[8px] flex h-[18px] w-[18px] items-center justify-center">
      <Ic size={18}><path d="M8 3a3.5 3.5 0 0 0-2 6.4V11h4V9.4A3.5 3.5 0 0 0 8 3zM6.5 13h3M2.5 5a7 7 0 0 0 0 6M1 4a9 9 0 0 0 0 8M13.5 5a7 7 0 0 1 0 6M15 4a9 9 0 0 1 0 8" /></Ic>
    </div>
    <div className="mt-auto flex h-[18px] w-[16px] items-center justify-center"><Target size={16} strokeWidth={1} /></div>
    <div className="mt-[9px] flex h-[18px] w-[16px] items-center justify-center"><CalendarDays size={16} strokeWidth={1} /></div>
    <div className="mt-[8px] flex h-[18px] w-[16px] items-center justify-center"><CircleHelp size={16} strokeWidth={1} /></div>
  </div>
);

const ranges = ["1D", "5D", "1M", "3M", "6M", "YTD", "1Y", "5Y", "All"];
const tabs = ["Pine Editor", "Strategy Tester", "Replay Trading", "Trading Panel"];

const RangeBar = () => (
  <div className="flex h-[24px] shrink-0 items-center bg-[#141927] text-[8.5px] text-[#b2b5be]">
    <div className="ml-[10px] flex gap-[7px]">
      {ranges.map((r) => (
        <span key={r}>{r}</span>
      ))}
    </div>
    <Sep className="ml-[6px]" />
    <span className="ml-[8px]"><CalendarClock size={12} strokeWidth={1} /></span>
    <div className="ml-auto mr-[10px] flex items-center">
      <span>08:20:25 (UTC-4)</span>
      <span className="ml-[7px]">ETH</span>
      <Sep className="ml-[5px]" />
      <span className="ml-[6px]">B-ADJ</span>
      <span className="ml-[7px]"><Scan size={10} strokeWidth={1} /></span>
    </div>
  </div>
);

const BottomBar = () => (
  <div className="mt-[2px] flex h-[22px] shrink-0 items-center bg-[#141927] text-[8.5px] text-[#b2b5be]">
    <span className="ml-[10px]">Forex Screener</span>
    <Chev className="ml-[5px]" />
    {tabs.map((t) => (
      <span key={t} className={t === "Pine Editor" ? "ml-[11px]" : "ml-[20px]"}>
        {t}
      </span>
    ))}
    <div className="ml-auto mr-[5px] flex items-center gap-[9px]">
      <ChevronUp size={12} strokeWidth={1} />
      <Scan size={12} strokeWidth={1} />
    </div>
  </div>
);

export default function App() {
  return (
    <div className="relative flex h-[778px] w-[1501px] flex-col overflow-hidden bg-black font-['Roboto',sans-serif] blur-[0.35px]">
      <div className="flex h-[5px] shrink-0">
        <div className="w-[78px]" />
        <div className="h-[4px] flex-1 bg-white" />
      </div>
      <TopBar />
      <div className="flex h-[731px] shrink-0 border-t border-[#2a2f3c]">
        <LeftRail />
        <div className="flex w-[1440px] shrink-0 flex-col bg-[#2a2f3c]">
          <div className="flex h-[682px] shrink-0">
            <LeftChart />
            <RightChart />
          </div>
          <RangeBar />
          <BottomBar />
        </div>
        <RightRail />
      </div>
      <Tv className="absolute left-[1415px] top-[703px] h-[28px] w-[55px] text-[#1c52c4] opacity-90" />
    </div>
  );
}
